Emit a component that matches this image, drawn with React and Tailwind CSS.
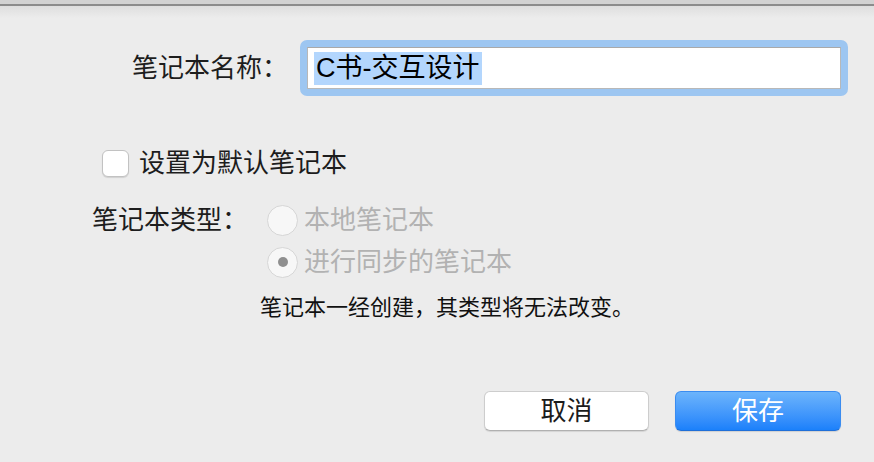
export default function App() {
  const font = { fontFamily: '"Liberation Sans", "Noto Sans CJK SC", sans-serif' };
  return (
    <div className="w-[874px] h-[462px] bg-[#ececec] flex flex-col overflow-hidden text-[#1d1d1d]" style={font}>
      {/* window top edge */}
      <div className="h-[4px] bg-[#d2d2d2]" />
      <div className="h-[2px] bg-[#8c8c8c]" />
      <div className="h-[12px] bg-gradient-to-b from-[#dedede] to-[#ececec]" />

      {/* name row */}
      <div className="mt-[22px] flex items-center">
        <div className="w-[288px] text-right text-[26px] leading-[32px]">笔记本名称：</div>
        <div className="ml-[12px] w-[548px] h-[56px] p-[7px] rounded-[7px] bg-[#9dc6f1]">
          <div className="h-full bg-white border border-[#b8b8b8] border-t-[#a9a9a9] flex items-center pl-[6px]">
            <span className="bg-[#b3d6fd] text-[27px] leading-[33px] text-black px-[2px]">C书-交互设计</span>
          </div>
        </div>
      </div>

      {/* default checkbox */}
      <div className="mt-[52px] h-[30px] flex items-center pl-[102px]">
        <div className="w-[27px] h-[27px] rounded-[6px] bg-white border border-[#c2c2c2] shadow-[0_1px_1px_rgba(0,0,0,0.12)]" />
        <div className="ml-[10px] text-[26px] leading-[30px]">设置为默认笔记本</div>
      </div>

      {/* type row */}
      <div className="mt-[27px] h-[30px] flex items-center pl-[92px]">
        <div className="w-[175px] text-[26px] leading-[30px]">笔记本类型：</div>
        <div className="w-[31px] h-[31px] rounded-full bg-[#f7f7f7] border border-[#d6d6d6]" />
        <div className="ml-[6px] text-[26px] leading-[30px] text-[#b2b2b2]">本地笔记本</div>
      </div>

      <div className="mt-[12px] h-[30px] flex items-center pl-[267px]">
        <div className="w-[31px] h-[31px] rounded-full bg-[#f7f7f7] border border-[#d6d6d6] flex items-center justify-center">
          <div className="w-[10px] h-[10px] rounded-full bg-[#8f8f8f]" />
        </div>
        <div className="ml-[6px] text-[26px] leading-[30px] text-[#b2b2b2]">进行同步的笔记本</div>
      </div>

      {/* note */}
      <div className="mt-[18px] h-[26px] pl-[260px] text-[22px] leading-[26px] text-[#111]">笔记本一经创建，其类型将无法改变。</div>

      {/* buttons */}
      <div className="mt-[70px] flex pl-[484px]">
        <div className="w-[165px] h-[40px] rounded-[6px] bg-white border border-[#cdcdcd] border-b-[#b0b0b0] shadow-[0_1px_1px_rgba(0,0,0,0.1)] flex items-center justify-center text-[26px] leading-[30px] text-[#1b1b1b]">取消</div>
        <div className="ml-[26px] w-[166px] h-[40px] rounded-[6px] bg-gradient-to-b from-[#6cb4fb] to-[#1a80fb] border border-[#3a8cf0] border-b-[#1f6fd8] shadow-[0_1px_1px_rgba(0,0,0,0.12)] flex items-center justify-center text-[26px] leading-[30px] text-white">保存</div>
      </div>
    </div>
  );
}
